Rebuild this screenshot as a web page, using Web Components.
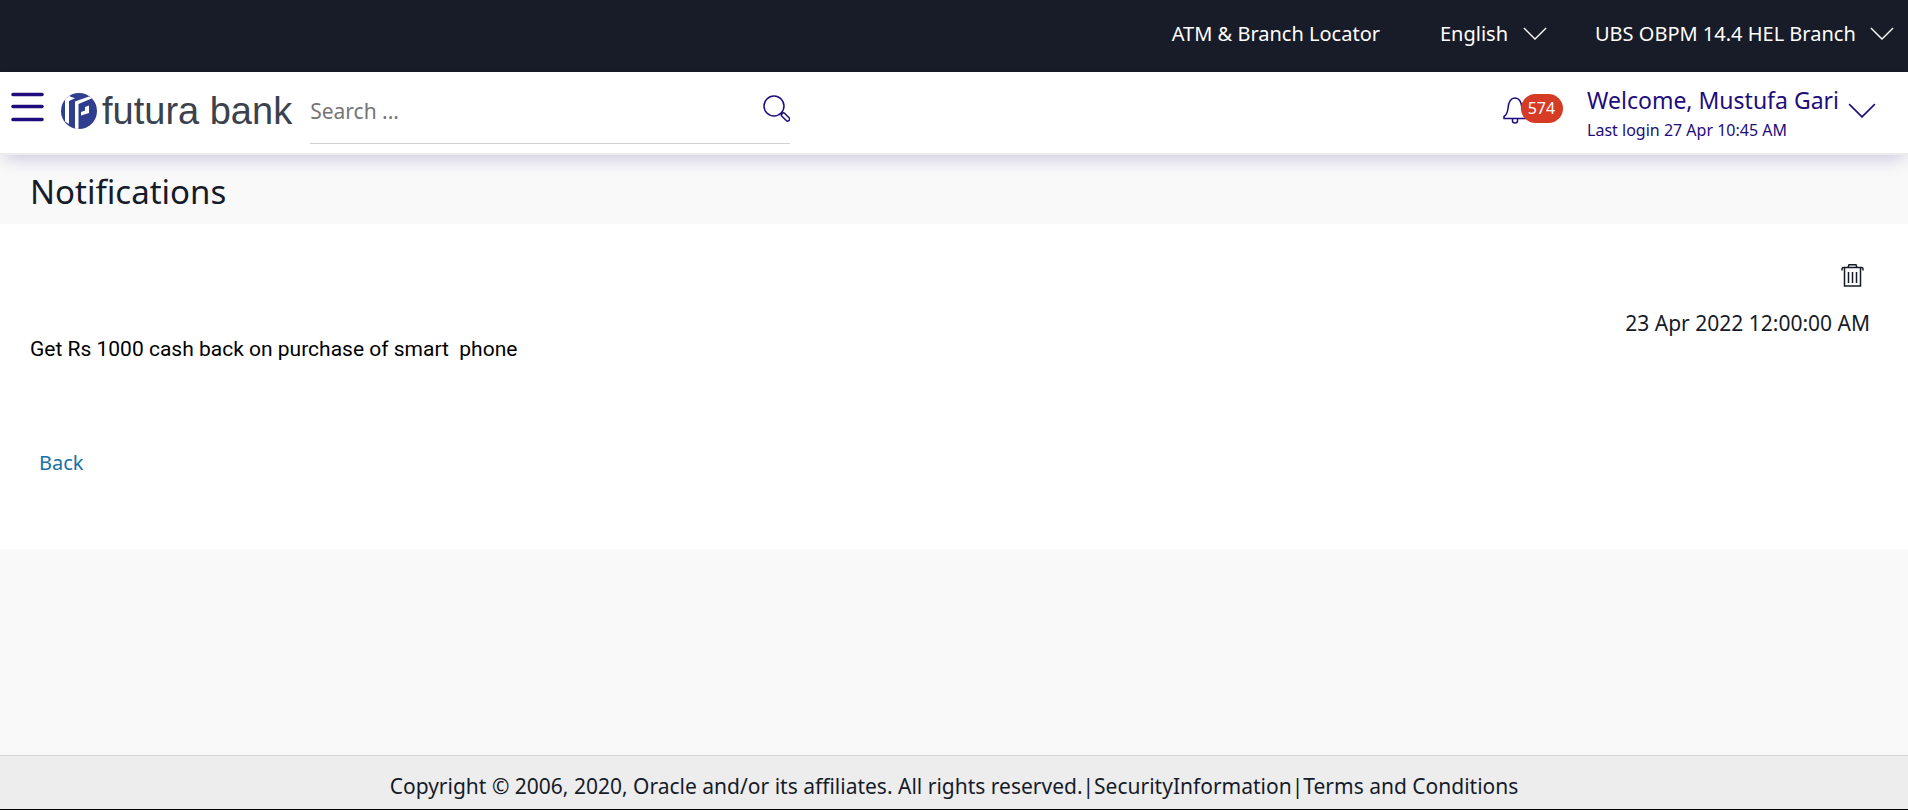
<!DOCTYPE html>
<html lang="en">
<head>
<meta charset="utf-8">
<meta name="viewport" content="width=device-width, initial-scale=1">
<title>Notifications - Futura Bank</title>
<style>
  body {
    margin: 0;
    font-family: "Noto Sans", "Open Sans", sans-serif;
    font-size: 21px;
    color: #161b29;
    --brand: #210c7d;
    --ink: #161b29;
    --bar: #181c28;
    --link: #1a6fa8;
    --page: #f9f9f9;
  }
</style>
</head>
<body>
<bank-shell>
  <top-bar slot="top">
    <a href="#locator">ATM &amp; Branch Locator</a>
    <pick-list label="Language" options="English"></pick-list>
    <pick-list label="Branch" options="UBS OBPM 14.4 HEL Branch"></pick-list>
  </top-bar>
  <bank-header slot="header">
    <search-box></search-box>
    <alert-bell count="574"></alert-bell>
    <user-menu name="Mustufa Gari" login="27 Apr 10:45 AM"></user-menu>
  </bank-header>
  <page-title>Notifications</page-title>
  <notification-detail time="23 Apr 2022 12:00:00 AM">Get Rs 1000 cash back on purchase of smart  phone</notification-detail>
  <bank-footer slot="footer"></bank-footer>
</bank-shell>

<script>
const chevron = (size, height) => `
  <svg width="${size}" height="${height}" viewBox="0 0 26 14" fill="none" stroke="currentColor" stroke-width="1.5" aria-hidden="true">
    <path d="M1 1l12 12L25 1"/>
  </svg>`;

class BankShell extends HTMLElement {
  connectedCallback() {
    this.attachShadow({ mode: 'open' });
    this.shadowRoot.innerHTML = `
      <style>
        :host {
          display: flex;
          flex-direction: column;
          box-sizing: border-box;
          min-height: 100vh;
          background: var(--page);
          border-bottom: 1px solid #000;
        }
        main { flex: 1; }
      </style>
      <slot name="top"></slot>
      <slot name="header"></slot>
      <main><slot></slot></main>
      <slot name="footer"></slot>
    `;
  }
}

class TopBar extends HTMLElement {
  connectedCallback() {
    this.attachShadow({ mode: 'open' });
    this.shadowRoot.innerHTML = `
      <style>
        :host { display: block; background: var(--bar); color: #fff; font-size: 20px; }
        nav {
          display: flex;
          justify-content: flex-end;
          align-items: center;
          box-sizing: border-box;
          min-height: 72px;
          padding: 0 14px 6px;
        }
        ::slotted(*) { margin-left: 48px; }
        ::slotted(a) { color: inherit; text-decoration: none; margin-right: 12px; }
      </style>
      <nav><slot></slot></nav>
    `;
  }
}

class PickList extends HTMLElement {
  connectedCallback() {
    const options = this.getAttribute('options').split(',');
    this.attachShadow({ mode: 'open' });
    this.shadowRoot.innerHTML = `
      <style>
        :host { display: block; }
        label { display: flex; align-items: center; position: relative; }
        select {
          appearance: none;
          border: 0;
          margin: 0;
          padding: 0 38px 0 0;
          background: transparent;
          color: inherit;
          font: inherit;
          cursor: pointer;
        }
        option { color: #161b29; }
        svg { position: absolute; right: 0; pointer-events: none; }
      </style>
      <label>
        <select aria-label="${this.getAttribute('label')}">
          ${options.map(o => `<option>${o}</option>`).join('')}
        </select>
        ${chevron(24, 13)}
      </label>
    `;
  }
}

class BankHeader extends HTMLElement {
  connectedCallback() {
    this.attachShadow({ mode: 'open' });
    this.shadowRoot.innerHTML = `
      <style>
        :host {
          display: flex;
          align-items: center;
          position: relative;
          box-sizing: border-box;
          min-height: 83px;
          padding: 0 32px 0 11px;
          background: #fff;
          color: var(--brand);
          border-bottom: 2px solid #ececec;
          box-shadow: 0 8px 16px -4px rgba(33, 12, 125, 0.2);
        }
        .menu {
          display: flex;
          border: 0;
          padding: 0 0 12px;
          background: none;
          color: inherit;
          cursor: pointer;
        }
        .logo {
          display: flex;
          align-items: center;
          gap: 5px;
          margin: 0 18px 0 17px;
          padding-bottom: 4px;
          color: #3b424d;
          font: 38px/44px "Liberation Sans", Arial, sans-serif;
          text-decoration: none;
          white-space: nowrap;
        }
        .logo svg { flex: none; }
        ::slotted(search-box) { flex: 0 1 480px; margin-right: auto; }
      </style>
      <button class="menu" aria-label="Menu">
        <svg width="33" height="32" viewBox="0 0 33 32" stroke="currentColor" stroke-width="3.6" stroke-linecap="round">
          <path d="M2 3.5h29M2 15.5h29M2 28.5h29"/>
        </svg>
      </button>
      <a class="logo" href="#home">
        <svg width="36" height="36" viewBox="0 0 36 36" aria-hidden="true">
          <clipPath id="disc"><circle cx="18" cy="18" r="18"/></clipPath>
          <g clip-path="url(#disc)">
            <path fill="#2f3e8f" d="M0 0h36v36H0z"/>
            <path fill="#fff" d="M4 5l5-3v1.500l5 1.800-6 2.700V31l-4-2.500z"/>
            <path fill="#fff" d="M14 8.500L28 3.500l5 1L17.500 11v25H14z"/>
            <path fill="#fff" d="M24 14l4-1.500v7.500L20 22.500V19l4-1.500z"/>
          </g>
        </svg>
        <span>futura bank</span>
      </a>
      <slot></slot>
    `;
  }
}

class SearchBox extends HTMLElement {
  connectedCallback() {
    this.attachShadow({ mode: 'open' });
    this.shadowRoot.innerHTML = `
      <style>
        :host { display: block; min-width: 0; }
        form {
          display: flex;
          align-items: center;
          height: 62px;
          border-bottom: 1px solid #d2d2d2;
        }
        input {
          flex: 1;
          min-width: 0;
          border: 0;
          outline: 0;
          padding: 0 0 2px;
          background: none;
          color: var(--ink);
          font: inherit;
        }
        input::placeholder { color: #757575; }
        button { display: flex; border: 0; padding: 0 0 6px; background: none; color: var(--brand); cursor: pointer; }
      </style>
      <form>
        <input type="search" placeholder="Search ..." aria-label="Search">
        <button type="button" aria-label="Search">
          <svg width="28" height="28" viewBox="0 0 28 28" fill="none" stroke="currentColor" stroke-width="1.500">
            <circle cx="12" cy="11" r="10"/>
            <path d="M19 18l1.500 1.500"/>
            <rect x="18.500" y="20" width="10" height="4" rx="2" transform="rotate(45 23.500 22)"/>
          </svg>
        </button>
      </form>
    `;
  }
}

class AlertBell extends HTMLElement {
  connectedCallback() {
    this.attachShadow({ mode: 'open' });
    this.shadowRoot.innerHTML = `
      <style>
        :host { display: block; margin-right: 24px; }
        button {
          display: flex;
          align-items: center;
          border: 0;
          padding: 0 0 8px;
          background: none;
          color: inherit;
          font: inherit;
          cursor: pointer;
        }
        svg { flex: none; margin-top: 4px; }
        .badge {
          margin-left: -6px;
          padding: 0 8px 0 7px;
          border-radius: 15px;
          background: #d63b25;
          color: #fff;
          font-size: 16px;
          line-height: 29px;
        }
      </style>
      <button aria-label="Notifications">
        <svg width="24" height="27" viewBox="0 0 24 27" fill="none" stroke="currentColor" stroke-width="1.500">
          <path d="M1 21.500v-2c2.500-1.500 3.500-4 4-8C5.500 5 7 1 12 1s6.500 4 7 10.500c.5 4 1.500 6.500 4 8v2z"/>
          <path d="M9.500 21.500v2.500q0 2 2.500 2t2.500-2v-2.500"/>
        </svg>
        <span class="badge">${this.getAttribute('count')}</span>
      </button>
    `;
  }
}

class UserMenu extends HTMLElement {
  connectedCallback() {
    this.attachShadow({ mode: 'open' });
    this.shadowRoot.innerHTML = `
      <style>
        :host { display: block; }
        button {
          display: flex;
          align-items: center;
          gap: 9px;
          border: 0;
          padding: 0;
          background: none;
          color: inherit;
          font: inherit;
          text-align: left;
          white-space: nowrap;
          cursor: pointer;
        }
        .name { display: block; padding-top: 2px; font-size: 23px; line-height: 32px; }
        .login { display: block; font-size: 16px; line-height: 28px; }
        svg { margin-bottom: 4px; }
      </style>
      <button>
        <span>
          <span class="name">Welcome, ${this.getAttribute('name')}</span>
          <span class="login">Last login ${this.getAttribute('login')}</span>
        </span>
        ${chevron(28, 15)}
      </button>
    `;
  }
}

class PageTitle extends HTMLElement {
  connectedCallback() {
    this.attachShadow({ mode: 'open' });
    this.shadowRoot.innerHTML = `
      <style>
        :host { display: block; padding: 14px 30px 10px; }
        h1 { margin: 0; font-size: 33px; font-weight: 400; line-height: 45px; }
      </style>
      <h1><slot></slot></h1>
    `;
  }
}

class NotificationDetail extends HTMLElement {
  connectedCallback() {
    this.attachShadow({ mode: 'open' });
    this.shadowRoot.innerHTML = `
      <style>
        :host { display: block; padding: 40px 38px 70px 30px; background: #fff; }
        .meta { display: flex; flex-direction: column; align-items: flex-end; }
        .delete {
          display: flex;
          margin-right: 6px;
          border: 0;
          padding: 0;
          background: none;
          color: var(--ink);
          cursor: pointer;
        }
        time { margin-top: 22px; line-height: 28px; }
        p {
          margin: 0;
          color: #000;
          font-family: Roboto, sans-serif;
          line-height: 24px;
          white-space: pre-wrap;
        }
        .back {
          display: inline-block;
          margin: 86px 9px 0;
          color: var(--link);
          font-size: 20px;
          line-height: 32px;
          text-decoration: none;
        }
      </style>
      <div class="meta">
        <button class="delete" aria-label="Delete">
          <svg width="23" height="23" viewBox="0 0 23 23" fill="none" stroke="currentColor" stroke-width="1.500">
            <path d="M1 6.500V5q0-1.500 1.500-1.500h18Q22 3.500 22 5v1.500M7 3.500l1-2.700h7l1 2.700M3.500 4v18h16V4"/>
            <path d="M7.500 8v11M11.500 8v11M15.500 8v11"/>
          </svg>
        </button>
        <time>${this.getAttribute('time')}</time>
      </div>
      <p><slot></slot></p>
      <a class="back" href="#back">Back</a>
    `;
  }
}

class BankFooter extends HTMLElement {
  connectedCallback() {
    this.attachShadow({ mode: 'open' });
    this.shadowRoot.innerHTML = `
      <style>
        :host {
          display: block;
          padding: 15px 16px 7px;
          background: #ededed;
          border-top: 1px solid #d4d6d6;
          line-height: 31px;
          text-align: center;
        }
        a { color: inherit; text-decoration: none; }
      </style>
      <footer>Copyright © 2006, 2020, Oracle and/or its affiliates. All rights reserved.|<a href="#security">SecurityInformation</a>|<a href="#terms">Terms and Conditions</a></footer>
    `;
  }
}

customElements.define('bank-shell', BankShell);
customElements.define('top-bar', TopBar);
customElements.define('pick-list', PickList);
customElements.define('bank-header', BankHeader);
customElements.define('search-box', SearchBox);
customElements.define('alert-bell', AlertBell);
customElements.define('user-menu', UserMenu);
customElements.define('page-title', PageTitle);
customElements.define('notification-detail', NotificationDetail);
customElements.define('bank-footer', BankFooter);
</script>
</body>
</html>
